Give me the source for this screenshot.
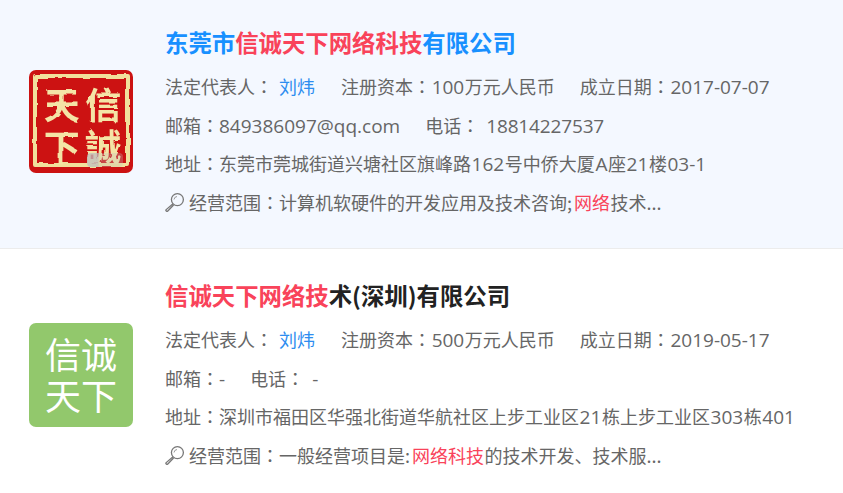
<div class="list">
  <section class="card active">
    <div class="logo seal">
      <svg class="defs" width="0" height="0" aria-hidden="true">
        <filter id="rough" x="-5%" y="-5%" width="110%" height="110%">
          <feTurbulence type="fractalNoise" baseFrequency="0.08" numOctaves="2" seed="4" />
          <feDisplacementMap in="SourceGraphic" scale="3.5" />
          <feGaussianBlur stdDeviation="0.5" />
        </filter>
      </svg>
      <div class="seal-inner">
        <span>天</span><span>信</span><span>下</span><span>誠</span>
      </div>
      <div class="mark"></div>
    </div>
    <div class="info">
      <h2 class="title blue">东莞市<em>信诚天下网络科技</em>有限公司</h2>
      <p><span class="item">法定代表人<i>：</i> <a>刘炜</a></span><span class="item">注册资本<i>：</i><b>100</b>万元人民币</span><span class="item">成立日期<i>：</i><b>2017-07-07</b></span></p>
      <p><span class="item">邮箱<i>：</i><b class="flat">849386097@qq.com</b></span><span class="item">电话<i>：</i> <b class="phone">18814227537</b></span></p>
      <p>地址<i>：</i>东莞市莞城街道兴塘社区旗峰路<b>162</b>号中侨大厦<b>A</b>座<b>21</b>楼<b>03-1</b></p>
      <p class="scope">
        <svg viewBox="0 0 20 20" width="20" height="20"><circle cx="12.4" cy="7.6" r="6" fill="none" stroke="#777" stroke-width="1.3"/><path d="M8 11.8 1.2 17.6a1 1 0 0 0 1.6 1.4L8.6 13" fill="none" stroke="#777" stroke-width="1.3"/><path d="M9 7.5a3.4 3.4 0 0 1 3-3" fill="none" stroke="#999" stroke-width="1"/></svg>
        <span>经营范围<i>：</i>计算机软硬件的开发应用及技术咨询;<em>网络</em>技术...</span>
      </p>
    </div>
  </section>
  <section class="card">
    <div class="logo green"><span>信诚</span><span>天下</span></div>
    <div class="info">
      <h2 class="title"><em>信诚天下网络技</em>术(深圳)有限公司</h2>
      <p><span class="item">法定代表人<i>：</i> <a>刘炜</a></span><span class="item">注册资本<i>：</i><b>500</b>万元人民币</span><span class="item">成立日期<i>：</i><b>2019-05-17</b></span></p>
      <p><span class="item">邮箱<i>：</i><b class="flat">-</b></span><span class="item">电话<i>：</i> <b class="dash">-</b></span></p>
      <p>地址<i>：</i>深圳市福田区华强北街道华航社区上步工业区<b>21</b>栋上步工业区<b>303</b>栋<b>401</b></p>
      <p class="scope">
        <svg viewBox="0 0 20 20" width="20" height="20"><circle cx="12.4" cy="7.6" r="6" fill="none" stroke="#777" stroke-width="1.3"/><path d="M8 11.8 1.2 17.6a1 1 0 0 0 1.6 1.4L8.6 13" fill="none" stroke="#777" stroke-width="1.3"/><path d="M9 7.5a3.4 3.4 0 0 1 3-3" fill="none" stroke="#999" stroke-width="1"/></svg>
        <span>经营范围<i>：</i>一般经营项目是:<em>网络科技</em>的技术开发、技术服...</span>
      </p>
    </div>
  </section>
</div>

<style>
  :global(body) { margin: 0; background: #fff; overflow: hidden; }
  .list { width: 843px; margin-top: -4px; font-family: "Noto Sans CJK SC", sans-serif; font-size: 18px; color: #666; }
  .card { display: flex; align-items: flex-start; height: 253px; box-sizing: border-box; padding: 30px 0 0 29px; gap: 32px; }
  .active { background: #f4f8ff; border-bottom: 1px solid #ececec; }
  .logo { position: relative; width: 104px; height: 104px; margin-top: 44px; border-radius: 7px; flex: none; box-sizing: border-box; }
  .seal { height: 103px; background: #cc1212; padding: 4px 3px 6px 4px; overflow: hidden; }
  .defs { position: absolute; }
  .seal-inner { height: 100%; box-sizing: border-box; border: 4px solid #f1e09c; border-radius: 2px; padding: 4px 2px 0 4px; display: grid; grid-template-columns: 1fr 1fr; grid-auto-rows: 42px; font-family: "Noto Sans CJK TC", serif; font-weight: 700; font-size: 36px; line-height: 42px; color: #f4e4a6; text-align: center; align-content: start; filter: url(#rough); }
  .mark { position: absolute; right: 10px; bottom: 6px; width: 36px; height: 14px; border-radius: 4px; background: linear-gradient(90deg, rgba(190, 190, 190, 0.75) 30%, rgba(190, 190, 190, 0.3) 35%); }
  .green { background: #92c86c; color: #fff; display: flex; flex-direction: column; align-items: center; justify-content: center; padding-bottom: 3px; font-size: 36px; line-height: 41px; }
  .info { flex: 1; min-width: 0; }
  .title { margin: 0 0 9px; font-size: 23.4px; line-height: 32px; font-weight: 700; color: #222; }
  .blue { color: #1890ff; }
  em { font-style: normal; color: #f9435a; }
  i { font-style: normal; font-family: "Noto Sans CJK TC", sans-serif; }
  b { font-weight: 400; font-family: "Open Sans", sans-serif; font-size: 19px; margin: 0 0.6px; }
  b.flat { margin: 0; }
  b.phone { margin: 0 0 0 3px; letter-spacing: -0.15px; }
  b.dash { margin: 0 0 0 4px; }
  p { margin: 0; height: 38.67px; line-height: 38.67px; white-space: nowrap; }
  .item { display: inline-block; margin-right: 25px; }
  a { color: #2e8df0; margin: 0 1px 0 2px; }
  .scope { display: flex; align-items: center; gap: 4px; }
  .scope em { margin: 0 0.5px 0 2px; }
</style>
